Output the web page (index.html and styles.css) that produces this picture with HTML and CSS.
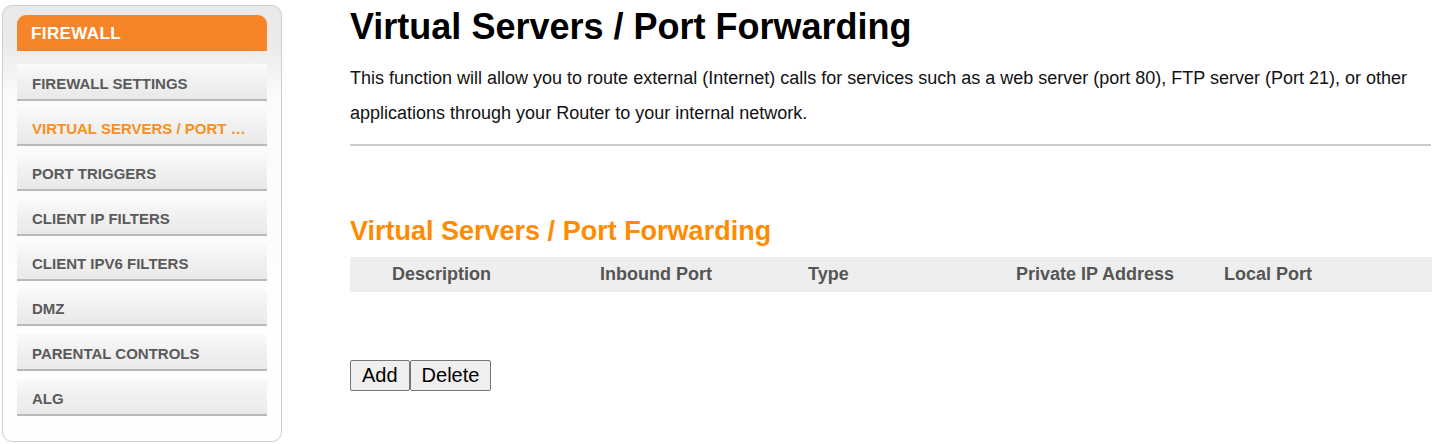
FILE: index.html
```html
<!DOCTYPE html>
<html lang="en">
<head>
<meta charset="utf-8">
<title>Virtual Servers / Port Forwarding</title>
<link rel="stylesheet" href="styles.css">
</head>
<body>
<div class="page">
  <nav class="sidebar">
    <div class="side-head">FIREWALL</div>
    <ul class="menu">
      <li class="menu-item">FIREWALL SETTINGS</li>
      <li class="menu-item active">VIRTUAL SERVERS / PORT FORWARDING</li>
      <li class="menu-item">PORT TRIGGERS</li>
      <li class="menu-item">CLIENT IP FILTERS</li>
      <li class="menu-item">CLIENT IPV6 FILTERS</li>
      <li class="menu-item">DMZ</li>
      <li class="menu-item">PARENTAL CONTROLS</li>
      <li class="menu-item">ALG</li>
    </ul>
  </nav>
  <main class="main">
    <h1 class="title">Virtual Servers / Port Forwarding</h1>
    <p class="intro">This function will allow you to route external (Internet) calls for services such as a web server (port 80), FTP server (Port 21), or other applications through your Router to your internal network.</p>
    <hr class="rule">
    <h2 class="subtitle">Virtual Servers / Port Forwarding</h2>
    <table class="grid">
      <colgroup>
        <col class="c-sel">
        <col class="c-col">
        <col class="c-col">
        <col class="c-col">
        <col class="c-col">
        <col class="c-col">
      </colgroup>
      <thead>
        <tr>
          <th></th>
          <th>Description</th>
          <th>Inbound Port</th>
          <th>Type</th>
          <th>Private IP Address</th>
          <th>Local Port</th>
        </tr>
      </thead>
      <tbody></tbody>
    </table>
    <div class="actions"><button class="btn" type="button">Add</button><button class="btn" type="button">Delete</button></div>
  </main>
</div>
</body>
</html>
```

FILE: styles.css
```css
html, body {
  margin: 0;
  padding: 0;
  background: #fff;
}

body {
  font-family: "Liberation Sans", Arial, sans-serif;
  color: #000;
}

.page {
  display: flex;
  align-items: flex-start;
  padding: 5px 0 0 2px;
}

.sidebar {
  width: 250px;
  flex: none;
  border: 1px solid #cfcfcf;
  border-radius: 10px;
  padding: 9px 14px 25px 14px;
  background: linear-gradient(to bottom, #e9e9e9 0px, #ebebeb 40px, #fbfbfb 90px, #fff 100%);
}

.side-head {
  height: 36px;
  line-height: 38px;
  padding-left: 14px;
  background: #f68529;
  border-radius: 9px 9px 0 0;
  color: #fff;
  font-weight: bold;
  font-size: 17px;
  letter-spacing: 0.4px;
  margin-bottom: 13px;
}

.menu {
  list-style: none;
  margin: 0;
  padding: 0;
}

.menu-item {
  height: 35px;
  line-height: 39px;
  padding: 0 14px 0 15px;
  margin-bottom: 8px;
  background: linear-gradient(to bottom, #fafafa 0%, #f2f2f2 40%, #e9e9e9 100%);
  border-bottom: 2px solid #b9b9b9;
  color: #5a5a5a;
  font-weight: bold;
  font-size: 15px;
  white-space: nowrap;
  overflow: hidden;
  text-overflow: ellipsis;
}

.menu-item:last-child {
  margin-bottom: 0;
}

.menu-item.active {
  color: #f7901e;
}

.main {
  margin-left: 68px;
  width: 1081px;
  padding-top: 1px;
}

.title {
  margin: 0;
  font-size: 36px;
  line-height: 41px;
  font-weight: bold;
  color: #000;
}

.intro {
  margin: 14px 0 0 0;
  font-size: 18px;
  line-height: 35px;
  color: #111;
}

.rule {
  margin: 13px 0 0 0;
  border: 0;
  height: 2px;
  background: #cccccc;
}

.subtitle {
  margin: 70px 0 0 0;
  font-size: 27px;
  line-height: 30px;
  font-weight: bold;
  color: #ff8c00;
}

.grid {
  margin-top: 11px;
  width: 1082px;
  border-collapse: collapse;
  table-layout: fixed;
}

.c-sel {
  width: 42px;
}

.c-col {
  width: 208px;
}

.grid th {
  height: 35px;
  padding: 0;
  background: #eeeeee;
  text-align: left;
  font-size: 18px;
  font-weight: bold;
  color: #555;
}

.actions {
  margin-top: 68px;
  display: flex;
}

.btn {
  font-family: "Liberation Sans", Arial, sans-serif;
  font-size: 20px;
  line-height: 23px;
  padding: 3px 11px;
  margin: 0;
  background: #efefef;
  border: 1px solid #767676;
  border-radius: 2px;
  color: #000;
}
```
